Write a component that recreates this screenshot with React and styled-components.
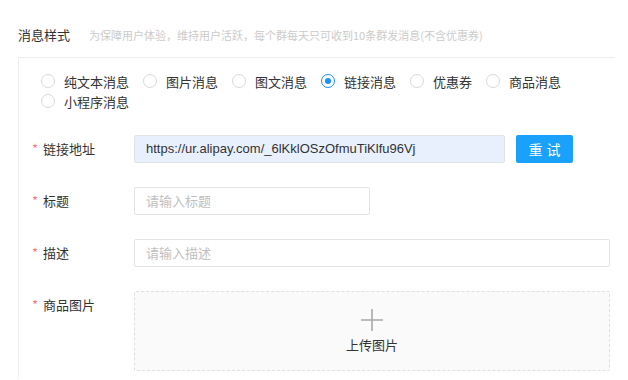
import React from 'react'
import styled, { createGlobalStyle } from 'styled-components'

const GlobalStyle = createGlobalStyle`
  body {
    margin: 0;
    background: #fff;
    font-family: "Noto Sans CJK SC", "Noto Sans", sans-serif;
    color: #333;
  }
`

const Page = styled.div`
  padding: 25px 0 0 18px;
  width: 597px;
`

const Header = styled.div`
  display: flex;
  align-items: baseline;
  gap: 19px;
  height: 20px;
  line-height: 20px;
`

const Title = styled.span`
  font-size: 13px;
  color: #333;
`

const Hint = styled.span`
  font-size: 11px;
  color: #cbcbcb;
`

const Panel = styled.div`
  margin-top: 12px;
  border-top: 1px solid #eeeeee;
  border-left: 1px solid #eeeeee;
  padding: 13px 0 8px 0;
`

const RadioGroup = styled.div`
  display: flex;
  flex-wrap: wrap;
  padding-left: 22px;
  margin-bottom: 24px;
`

const RadioItem = styled.label`
  display: flex;
  align-items: center;
  height: 20px;
  margin-right: 14px;
  font-size: 13px;
  color: #333;
  cursor: pointer;
`

const RadioCircle = styled.span`
  box-sizing: border-box;
  width: 14px;
  height: 14px;
  border-radius: 50%;
  border: 1px solid ${p => (p.checked ? '#1890ff' : '#d9d9d9')};
  margin-right: 9px;
  display: flex;
  align-items: center;
  justify-content: center;

  &::after {
    content: '';
    width: 6px;
    height: 6px;
    border-radius: 50%;
    background: #1890ff;
    display: ${p => (p.checked ? 'block' : 'none')};
  }
`

const Form = styled.div`
  display: flex;
  flex-direction: column;
  gap: 24px;
  padding-left: 12px;
`

const Row = styled.div`
  display: flex;
  align-items: flex-start;
`

const Label = styled.div`
  width: 103px;
  flex: none;
  line-height: 28px;
  font-size: 13px;
  color: #333;
`

const Star = styled.span`
  color: #f77b80;
  margin-right: 5px;
  margin-left: 1px;
`

const Input = styled.div`
  box-sizing: border-box;
  width: ${p => p.w}px;
  height: 28px;
  line-height: 26px;
  padding: 0 11px;
  border: 1px solid #e3e3e3;
  border-radius: 2px;
  background: ${p => (p.filled ? '#e8f0fe' : '#fff')};
  color: ${p => (p.filled ? '#333' : '#c0c0c0')};
  font-size: 13px;
  font-family: "Liberation Sans", "Noto Sans CJK SC", sans-serif;
  white-space: nowrap;
  overflow: hidden;

  & > span.cjk {
    font-family: "Noto Sans CJK SC", sans-serif;
  }
`

const Button = styled.button`
  margin-left: 11px;
  width: 57px;
  height: 28px;
  border: none;
  border-radius: 2px;
  background: #1aa1fb;
  color: #fff;
  font-size: 14px;
  font-family: "Noto Sans CJK SC", sans-serif;
  letter-spacing: 4px;
  padding: 0 0 0 4px;
`

const Upload = styled.div`
  box-sizing: border-box;
  width: 476px;
  height: 80px;
  border: 1px dashed #e0e0e0;
  border-radius: 2px;
  background: #fafafa;
  display: flex;
  flex-direction: column;
  align-items: center;
  padding-top: 17px;
`

const UploadText = styled.div`
  margin-top: 4px;
  font-size: 13px;
  color: #333;
`

const PlusIcon = () => (
  <svg width="22" height="22" viewBox="0 0 22 22">
    <path d="M11 0v22M0 11h22" stroke="#a8a8a8" strokeWidth="1.6" fill="none" />
  </svg>
)

const options = ['纯文本消息', '图片消息', '图文消息', '链接消息', '优惠券', '商品消息', '小程序消息']

export default function App() {
  return (
    <Page>
      <GlobalStyle />
      <Header>
        <Title>消息样式</Title>
        <Hint>为保障用户体验，维持用户活跃，每个群每天只可收到10条群发消息(不含优惠券)</Hint>
      </Header>
      <Panel>
        <RadioGroup>
          {options.map(o => (
            <RadioItem key={o}>
              <RadioCircle checked={o === '链接消息'} />
              {o}
            </RadioItem>
          ))}
        </RadioGroup>
        <Form>
          <Row>
            <Label><Star>*</Star>链接地址</Label>
            <Input w={371} filled>https://ur.alipay.com/_6lKklOSzOfmuTiKlfu96Vj</Input>
            <Button>重试</Button>
          </Row>
          <Row>
            <Label><Star>*</Star>标题</Label>
            <Input w={236}><span className="cjk">请输入标题</span></Input>
          </Row>
          <Row>
            <Label><Star>*</Star>描述</Label>
            <Input w={476}><span className="cjk">请输入描述</span></Input>
          </Row>
          <Row>
            <Label><Star>*</Star>商品图片</Label>
            <Upload>
              <PlusIcon />
              <UploadText>上传图片</UploadText>
            </Upload>
          </Row>
        </Form>
      </Panel>
    </Page>
  )
}
